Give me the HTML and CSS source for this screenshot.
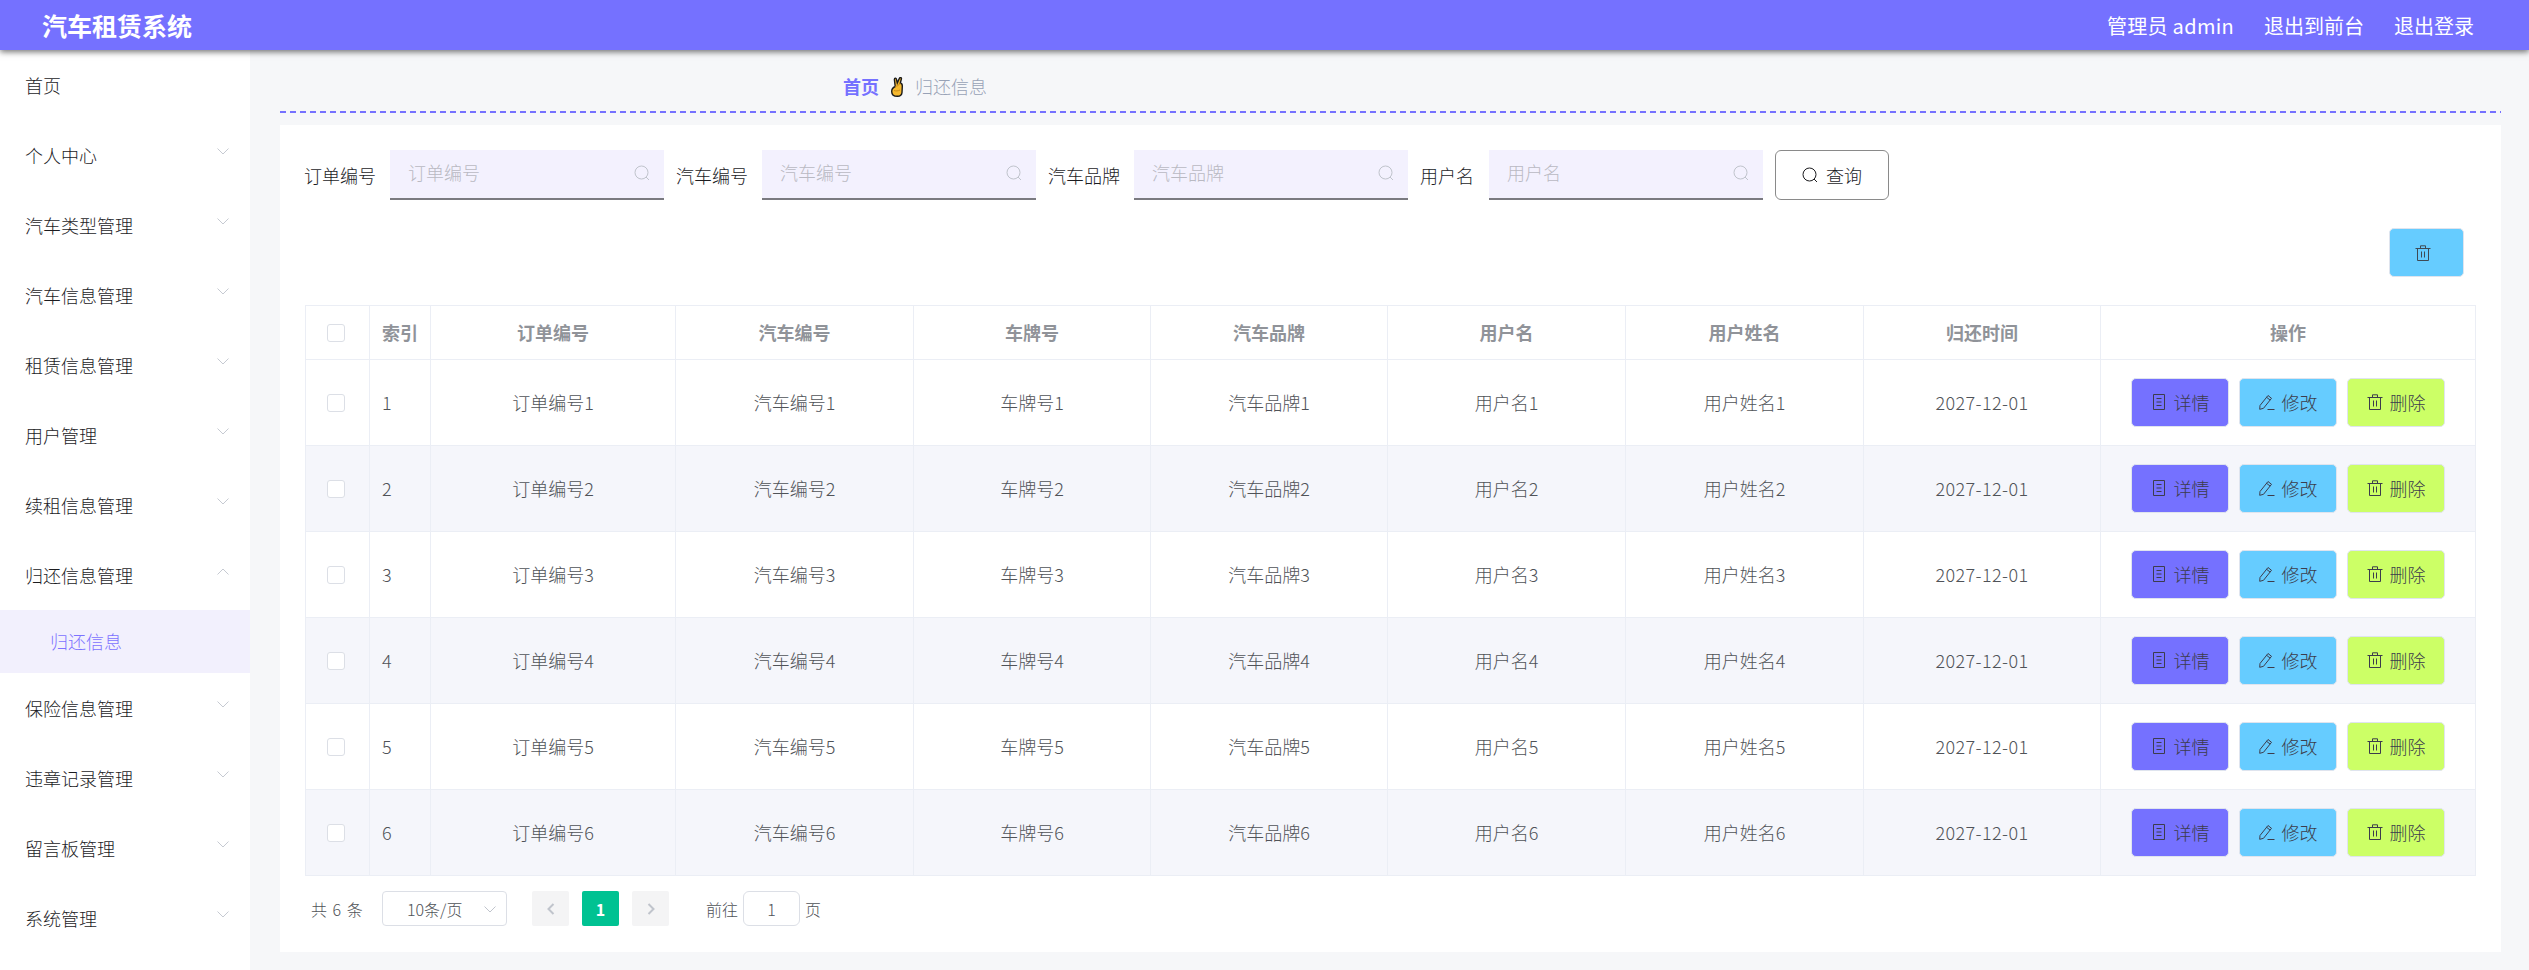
FILE: index.html
```html
<!DOCTYPE html>
<html lang="zh-CN">

<head>
    <meta charset="UTF-8">
    <meta name="viewport" content="width=device-width, initial-scale=1.0">
    <title>汽车租赁系统</title>
    <link rel="stylesheet" href="styles.css">
</head>

<body>
    <svg class="icon-defs" aria-hidden="true">
        <symbol id="i-search" viewBox="0 0 16 16"><circle cx="7.5" cy="7.500" r="6.500" /><path d="M12 12l3 3" /></symbol>
        <symbol id="i-doc" viewBox="0 0 16 16"><path d="M2.500 .5h11v15h-11zM5.500 4.500h5M5.500 8h5M5.500 11.500h5" /></symbol>
        <symbol id="i-edit" viewBox="0 0 16 16"><path d="M1 11.500L9 1.500l3.500 2.800-8 10-3.800 1zM7.600 3.300l3.500 2.800M8.500 15.500h7" /></symbol>
        <symbol id="i-trash" viewBox="0 0 16 16"><path d="M.5 3.500h15M2.500 3.500v12h11v-12M5.500 3.500V.8h5v2.700M6.500 6.500v6M9.500 6.500v6" /></symbol>
        <symbol id="i-down" viewBox="0 0 12 7"><path d="M.5 .5L6 6l5.500-5.500" /></symbol>
        <symbol id="i-up" viewBox="0 0 12 7"><path d="M.5 6.500L6 1l5.500 5.500" /></symbol>
    </svg>

    <header class="topbar">
        <div class="brand">汽车租赁系统</div>
        <nav class="top-links">
            <span class="top-user">管理员 admin</span>
            <span>退出到前台</span>
            <span>退出登录</span>
        </nav>
    </header>

    <div class="layout">
        <aside class="sidebar">
            <div class="menu-item">首页</div>
            <div class="menu-item">个人中心<svg class="chev"><use href="#i-down" /></svg></div>
            <div class="menu-item">汽车类型管理<svg class="chev"><use href="#i-down" /></svg></div>
            <div class="menu-item">汽车信息管理<svg class="chev"><use href="#i-down" /></svg></div>
            <div class="menu-item">租赁信息管理<svg class="chev"><use href="#i-down" /></svg></div>
            <div class="menu-item">用户管理<svg class="chev"><use href="#i-down" /></svg></div>
            <div class="menu-item">续租信息管理<svg class="chev"><use href="#i-down" /></svg></div>
            <div class="menu-item">归还信息管理<svg class="chev"><use href="#i-up" /></svg></div>
            <div class="submenu-item">归还信息</div>
            <div class="menu-item">保险信息管理<svg class="chev"><use href="#i-down" /></svg></div>
            <div class="menu-item">违章记录管理<svg class="chev"><use href="#i-down" /></svg></div>
            <div class="menu-item">留言板管理<svg class="chev"><use href="#i-down" /></svg></div>
            <div class="menu-item">系统管理<svg class="chev"><use href="#i-down" /></svg></div>
        </aside>

        <main class="main">
            <div class="breadcrumb">
                <span class="crumb-home">首页</span>
                <svg class="crumb-sep" viewBox="0 0 12 20">
                    <path d="M4.200 9.500L3.400 2.600C3.300 .8 5.200 .6 5.500 2.300L6.300 6 8.300 1.500C9.100 -.2 10.900 .6 10.300 2.300L9.300 6.200C10.800 6.300 11.400 7.500 11.300 9.500L11 15.500C10.800 18.300 9 19.300 6.500 19.300 2.800 19.300 .7 17.600 .7 14.400 .7 11.800 2.200 10.300 4.200 9.500Z" />
                    <path class="crumb-line" d="M4.200 9.500C5.500 9 7.500 9 9.300 6.200M3 13.500c2 .8 4 .5 6-.5" />
                </svg>
                <span class="crumb-current">归还信息</span>
            </div>

            <section class="card">
                <form class="search-bar">
                    <label class="search-label">订单编号</label>
                    <div class="search-box"><input placeholder="订单编号"><svg class="search-icon"><use href="#i-search" /></svg></div>
                    <label class="search-label">汽车编号</label>
                    <div class="search-box"><input placeholder="汽车编号"><svg class="search-icon"><use href="#i-search" /></svg></div>
                    <label class="search-label">汽车品牌</label>
                    <div class="search-box"><input placeholder="汽车品牌"><svg class="search-icon"><use href="#i-search" /></svg></div>
                    <label class="search-label search-label-last">用户名</label>
                    <div class="search-box"><input placeholder="用户名"><svg class="search-icon"><use href="#i-search" /></svg></div>
                    <button class="query-btn" type="button"><svg class="btn-icon"><use href="#i-search" /></svg>查询</button>
                </form>

                <div class="table-actions">
                    <button class="bulk-delete" type="button"><svg class="btn-icon"><use href="#i-trash" /></svg></button>
                </div>

                <table class="data-table">
                    <colgroup>
                        <col class="col-check">
                        <col class="col-index">
                        <col class="col-first">
                        <col class="col-a">
                        <col class="col-b">
                        <col class="col-b">
                        <col class="col-a">
                        <col class="col-a">
                        <col class="col-b">
                        <col>
                    </colgroup>
                    <thead>
                        <tr>
                            <th class="cell-check"><span class="checkbox"></span></th>
                            <th>索引</th>
                            <th>订单编号</th>
                            <th>汽车编号</th>
                            <th>车牌号</th>
                            <th>汽车品牌</th>
                            <th>用户名</th>
                            <th>用户姓名</th>
                            <th>归还时间</th>
                            <th>操作</th>
                        </tr>
                    </thead>
                    <tbody>
                        <tr>
                            <td class="cell-check"><span class="checkbox"></span></td>
                            <td class="cell-index">1</td>
                            <td>订单编号1</td>
                            <td>汽车编号1</td>
                            <td>车牌号1</td>
                            <td>汽车品牌1</td>
                            <td>用户名1</td>
                            <td>用户姓名1</td>
                            <td class="cell-date">2027-12-01</td>
                            <td><div class="row-actions"><button class="btn btn-detail" type="button"><svg class="btn-icon"><use href="#i-doc" /></svg>详情</button><button class="btn btn-edit" type="button"><svg class="btn-icon"><use href="#i-edit" /></svg>修改</button><button class="btn btn-delete" type="button"><svg class="btn-icon"><use href="#i-trash" /></svg>删除</button></div></td>
                        </tr>
                        <tr>
                            <td class="cell-check"><span class="checkbox"></span></td>
                            <td class="cell-index">2</td>
                            <td>订单编号2</td>
                            <td>汽车编号2</td>
                            <td>车牌号2</td>
                            <td>汽车品牌2</td>
                            <td>用户名2</td>
                            <td>用户姓名2</td>
                            <td class="cell-date">2027-12-01</td>
                            <td><div class="row-actions"><button class="btn btn-detail" type="button"><svg class="btn-icon"><use href="#i-doc" /></svg>详情</button><button class="btn btn-edit" type="button"><svg class="btn-icon"><use href="#i-edit" /></svg>修改</button><button class="btn btn-delete" type="button"><svg class="btn-icon"><use href="#i-trash" /></svg>删除</button></div></td>
                        </tr>
                        <tr>
                            <td class="cell-check"><span class="checkbox"></span></td>
                            <td class="cell-index">3</td>
                            <td>订单编号3</td>
                            <td>汽车编号3</td>
                            <td>车牌号3</td>
                            <td>汽车品牌3</td>
                            <td>用户名3</td>
                            <td>用户姓名3</td>
                            <td class="cell-date">2027-12-01</td>
                            <td><div class="row-actions"><button class="btn btn-detail" type="button"><svg class="btn-icon"><use href="#i-doc" /></svg>详情</button><button class="btn btn-edit" type="button"><svg class="btn-icon"><use href="#i-edit" /></svg>修改</button><button class="btn btn-delete" type="button"><svg class="btn-icon"><use href="#i-trash" /></svg>删除</button></div></td>
                        </tr>
                        <tr>
                            <td class="cell-check"><span class="checkbox"></span></td>
                            <td class="cell-index">4</td>
                            <td>订单编号4</td>
                            <td>汽车编号4</td>
                            <td>车牌号4</td>
                            <td>汽车品牌4</td>
                            <td>用户名4</td>
                            <td>用户姓名4</td>
                            <td class="cell-date">2027-12-01</td>
                            <td><div class="row-actions"><button class="btn btn-detail" type="button"><svg class="btn-icon"><use href="#i-doc" /></svg>详情</button><button class="btn btn-edit" type="button"><svg class="btn-icon"><use href="#i-edit" /></svg>修改</button><button class="btn btn-delete" type="button"><svg class="btn-icon"><use href="#i-trash" /></svg>删除</button></div></td>
                        </tr>
                        <tr>
                            <td class="cell-check"><span class="checkbox"></span></td>
                            <td class="cell-index">5</td>
                            <td>订单编号5</td>
                            <td>汽车编号5</td>
                            <td>车牌号5</td>
                            <td>汽车品牌5</td>
                            <td>用户名5</td>
                            <td>用户姓名5</td>
                            <td class="cell-date">2027-12-01</td>
                            <td><div class="row-actions"><button class="btn btn-detail" type="button"><svg class="btn-icon"><use href="#i-doc" /></svg>详情</button><button class="btn btn-edit" type="button"><svg class="btn-icon"><use href="#i-edit" /></svg>修改</button><button class="btn btn-delete" type="button"><svg class="btn-icon"><use href="#i-trash" /></svg>删除</button></div></td>
                        </tr>
                        <tr>
                            <td class="cell-check"><span class="checkbox"></span></td>
                            <td class="cell-index">6</td>
                            <td>订单编号6</td>
                            <td>汽车编号6</td>
                            <td>车牌号6</td>
                            <td>汽车品牌6</td>
                            <td>用户名6</td>
                            <td>用户姓名6</td>
                            <td class="cell-date">2027-12-01</td>
                            <td><div class="row-actions"><button class="btn btn-detail" type="button"><svg class="btn-icon"><use href="#i-doc" /></svg>详情</button><button class="btn btn-edit" type="button"><svg class="btn-icon"><use href="#i-edit" /></svg>修改</button><button class="btn btn-delete" type="button"><svg class="btn-icon"><use href="#i-trash" /></svg>删除</button></div></td>
                        </tr>
                    </tbody>
                </table>

                <div class="pagination">
                    <span class="page-total">共 6 条</span>
                    <div class="page-size">10条/页<svg class="page-size-chev"><use href="#i-down" /></svg></div>
                    <button class="page-btn" type="button"><svg class="page-arrow" viewBox="0 0 8 12"><path d="M6.500 1L1.500 6l5 5" /></svg></button>
                    <button class="page-btn page-active" type="button">1</button>
                    <button class="page-btn" type="button"><svg class="page-arrow" viewBox="0 0 8 12"><path d="M1.500 1l5 5-5 5" /></svg></button>
                    <span class="page-goto">前往</span>
                    <input class="page-input" value="1">
                    <span class="page-unit">页</span>
                </div>
            </section>
        </main>
    </div>
</body>

</html>
```

FILE: styles.css
```css
* {
    box-sizing: border-box;
}

body {
    margin: 0;
    height: 970px;
    overflow: hidden;
    display: flex;
    flex-direction: column;
    background-color: #f6f7f9;
    color: #505358;
    font-family: "Noto Sans CJK SC", "Noto Sans", sans-serif;
    font-size: 18px;
    font-weight: 300;
}

.icon-defs {
    display: none;
}

svg {
    fill: none;
    stroke: currentColor;
    stroke-width: 1;
}

/* Top bar */
.topbar {
    position: relative;
    z-index: 10;
    flex: none;
    height: 50px;
    display: flex;
    align-items: center;
    justify-content: space-between;
    padding: 0 55px 0 42px;
    background-color: #7571ff;
    box-shadow: 0 2px 6px rgba(0, 0, 0, 0.55);
    color: #fff;
}

.brand {
    font-size: 25px;
    font-weight: 700;
}

.top-links {
    display: flex;
    gap: 30px;
    font-size: 20px;
    font-weight: 400;
}

.top-user {
    letter-spacing: 0.3px;
}

.layout {
    flex: 1;
    display: flex;
    min-height: 0;
}

/* Sidebar */
.sidebar {
    flex: none;
    width: 250px;
    background-color: #fff;
    color: #1c1c1f;
}

.menu-item {
    height: 70px;
    display: flex;
    align-items: center;
    justify-content: space-between;
    padding: 0 21px 0 25px;
}

.chev {
    width: 12px;
    height: 7px;
    margin-top: -7px;
    color: #c6cad2;
}

.submenu-item {
    height: 63px;
    display: flex;
    align-items: center;
    padding: 0 0 2px 50px;
    background-color: #f2f0fd;
    color: #7d72ff;
}

/* Main column */
.main {
    flex: 1;
    min-width: 0;
    display: flex;
    flex-direction: column;
    padding: 0 28px 18px 30px;
}

.breadcrumb {
    flex: none;
    height: 63px;
    display: flex;
    align-items: center;
    padding: 8px 0 0 563px;
    background: repeating-linear-gradient(90deg, #7571ff 0 6px, transparent 6px 10px) left bottom / 100% 2px no-repeat;
}

.crumb-home {
    color: #7571ff;
    font-weight: 700;
}

.crumb-sep {
    width: 12px;
    height: 20px;
    margin: 3px 12px 0;
    fill: #f5b82e;
    stroke: #1a1a1a;
    stroke-width: 1.4;
}

.crumb-line {
    fill: none;
    stroke: #c98a16;
    stroke-width: 1;
}

.crumb-current {
    color: #98a2b6;
}

.card {
    flex: 1;
    margin-top: 12px;
    padding: 25px;
    background-color: #fff;
}

/* Search row */
.search-bar {
    display: flex;
    align-items: center;
    height: 50px;
    margin-left: -1px;
    color: #1c1c1f;
}

.search-label {
    margin-right: 14px;
    white-space: nowrap;
}

.search-label-last {
    margin-right: 15px;
}

.search-box {
    width: 274px;
    height: 50px;
    margin-right: 12px;
    display: flex;
    align-items: center;
    padding: 0 14px 2px 18px;
    background-color: #f3f1fe;
    border-bottom: 2px solid #7a7a80;
}

.search-box input {
    flex: 1;
    min-width: 0;
    padding: 0;
    border: 0;
    outline: 0;
    background: transparent;
    font: inherit;
    margin-top: -3px;
}

.search-box input::placeholder {
    color: #b9b9c2;
}

.search-icon {
    width: 16px;
    height: 16px;
    color: #c0c4cc;
}

.query-btn {
    width: 114px;
    height: 50px;
    display: flex;
    align-items: center;
    justify-content: center;
    gap: 8px;
    padding: 0;
    border: 1px solid #8a8a8a;
    border-radius: 6px;
    background-color: #fff;
    color: #1c1c1f;
    font: inherit;
}

.btn-icon {
    flex: none;
    width: 16px;
    height: 16px;
}

.table-actions {
    display: flex;
    justify-content: flex-end;
    margin: 28px 12px 28px 0;
}

.bulk-delete {
    width: 75px;
    height: 49px;
    padding: 0;
    display: flex;
    align-items: center;
    justify-content: center;
    border: 1px solid #dfe4ee;
    border-radius: 5px;
    background-color: #66ccff;
    color: #3f4a55;
}

.bulk-delete .btn-icon {
    margin-right: 7px;
}

/* Table */
.data-table {
    width: 2171px;
    border-collapse: collapse;
    table-layout: fixed;
}

.col-check {
    width: 64px;
}

.col-index {
    width: 61px;
}

.col-first {
    width: 245px;
}

.col-a {
    width: 238px;
}

.col-b {
    width: 237px;
}

.data-table th,
.data-table td {
    padding: 0 0 2px;
    border: 1px solid #ebeef5;
    text-align: center;
}

.data-table th {
    height: 54px;
    color: #909399;
    font-weight: 700;
}

.data-table td {
    height: 86px;
}

.data-table tbody tr:nth-child(even) {
    background-color: #f5f6fb;
}

.data-table .cell-check {
    text-align: left;
    padding: 0 0 0 21px;
}

.data-table .cell-index {
    text-align: left;
    padding-left: 12px;
}

.data-table .cell-date {
    letter-spacing: 0.4px;
}

.checkbox {
    display: block;
    width: 18px;
    height: 18px;
    border: 1px solid #dcdfe6;
    border-radius: 3px;
    background-color: #fff;
}

.row-actions {
    display: flex;
    justify-content: center;
    gap: 10.5px;
    margin-bottom: -2px;
}

.btn {
    width: 97.5px;
    height: 49px;
    display: flex;
    align-items: center;
    justify-content: center;
    gap: 7px;
    padding: 0 0 2px;
    border: 1px solid #dfe4ee;
    border-radius: 5px;
    color: #3c3c4c;
    font: inherit;
}

.btn-detail {
    background-color: #7571ff;
}

.btn-edit {
    background-color: #66ccff;
}

.btn-delete {
    background-color: #ccff66;
}

/* Pagination */
.pagination {
    display: flex;
    align-items: center;
    margin-top: 15px;
    padding-left: 6px;
    font-size: 16px;
}

.page-total {
    width: 71px;
    word-spacing: 2px;
}

.page-size {
    position: relative;
    width: 125px;
    height: 35px;
    margin-right: 25px;
    display: flex;
    align-items: center;
    padding-left: 24px;
    border: 1px solid #dcdfe6;
    border-radius: 4px;
}

.page-size-chev {
    position: absolute;
    right: 10px;
    top: 14px;
    width: 12px;
    height: 7px;
    color: #c0c4cc;
}

.page-btn {
    width: 37px;
    height: 35px;
    margin-right: 13px;
    display: flex;
    align-items: center;
    justify-content: center;
    padding: 0;
    border: 0;
    border-radius: 2px;
    background-color: #f4f4f5;
    color: #c0c4cc;
    font-family: inherit;
    font-size: 16px;
    font-weight: 700;
}

.page-active {
    background-color: #00c292;
    color: #fff;
}

.page-arrow {
    width: 8px;
    height: 12px;
    stroke-width: 2;
}

.page-goto {
    margin-left: 24px;
    margin-right: 5px;
}

.page-input {
    width: 57px;
    height: 35px;
    padding: 0;
    border: 1px solid #dcdfe6;
    border-radius: 6px;
    outline: 0;
    color: #505358;
    font: inherit;
    text-align: center;
}

.page-unit {
    margin-left: 5px;
}
```
